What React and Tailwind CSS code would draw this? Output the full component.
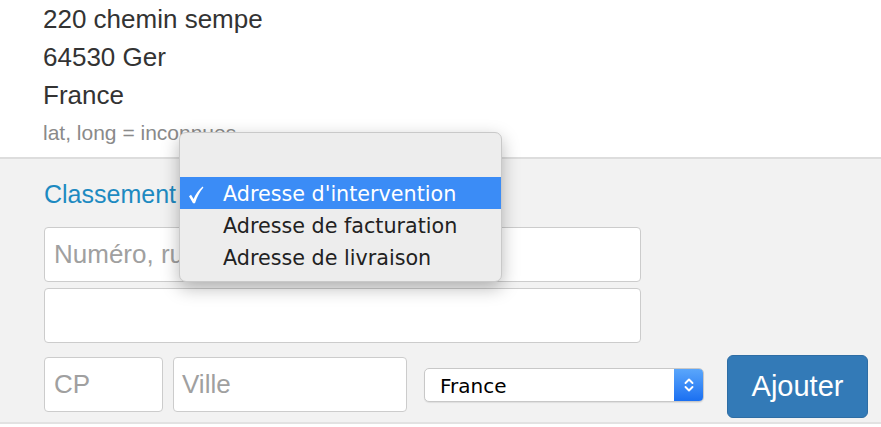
import React from "react";

function Chevrons() {
  return (
    <svg width="12" height="20" viewBox="0 0 12 20" fill="none" stroke="white" strokeWidth="1.9" strokeLinecap="round" strokeLinejoin="round">
      <path d="M2.5 8 L6 4.5 L9.5 8" />
      <path d="M2.5 12 L6 15.5 L9.5 12" />
    </svg>
  );
}

function Check() {
  return (
    <svg width="16" height="18" viewBox="0 0 16 18" fill="white">
      <path d="M1 10.2 L3 8.8 L5.6 13 C7.6 8.6 10.6 4 14.6 0.6 L15.4 1.4 C11.8 5.4 9.2 10.6 7 17.2 L5 17.2 Z" />
    </svg>
  );
}

export default function App() {
  return (
    <div className="relative w-[881px] h-[427px] overflow-hidden bg-white text-[#333]" style={{ fontFamily: '"Liberation Sans", Arial, sans-serif' }}>
      <div className="pl-[43px]">
        <div className="text-[26px] leading-[38px]">220 chemin sempe</div>
        <div className="text-[26px] leading-[38px]">64530 Ger</div>
        <div className="text-[26px] leading-[38px]">France</div>
        <div className="text-[21px] leading-[38px] text-[#8a8a8a]">lat, long = inconnues</div>
      </div>
      <div className="mt-[5px] border-t-2 border-[#dddddd] bg-[#f2f2f2] h-[265px] pl-[44px]">
        <div className="pt-[20px] text-[25px] leading-[30px] text-[#1d8ac1]">Classement</div>
        <div className="mt-[18px] flex flex-col gap-[6px]">
          <div className="w-[597px] h-[55px] bg-white border border-[#cccccc] rounded-[4px] pl-[9px] flex items-center text-[26px] text-[#a0a0a0]">Numéro, rue</div>
          <div className="w-[597px] h-[55px] bg-white border border-[#cccccc] rounded-[4px]"></div>
        </div>
        <div className="mt-[12px] flex items-start">
          <div className="mt-[2px] w-[119px] h-[55px] bg-white border border-[#cccccc] rounded-[4px] pl-[9px] flex items-center text-[26px] text-[#a0a0a0]">CP</div>
          <div className="mt-[2px] ml-[10px] w-[234px] h-[55px] bg-white border border-[#cccccc] rounded-[4px] pl-[8px] flex items-center text-[26px] text-[#a0a0a0]">Ville</div>
          <div className="mt-[13px] ml-[17px] w-[280px] h-[34px] bg-white rounded-[5px] border border-[#c8c8c8] flex items-stretch overflow-hidden shadow-[0_1px_1px_rgba(0,0,0,0.08)]">
            <div className="flex-1 pl-[15px] pt-[1px] flex items-center text-[20px] text-black" style={{ fontFamily: '"DejaVu Sans", sans-serif' }}>France</div>
            <div className="w-[29px] bg-gradient-to-b from-[#5aa6fb] to-[#1a6ff1] flex items-center justify-center">
              <Chevrons />
            </div>
          </div>
          <div className="ml-[23px] w-[141px] h-[63px] bg-[#337ab7] rounded-[6px] border border-[#2e6da4] flex items-center justify-center text-white text-[29px]">Ajouter</div>
        </div>
      </div>
      <div className="border-t-2 border-[#e2e2e2]"></div>

      <div className="absolute left-[179px] top-[132px] w-[323px] h-[150px] bg-[#ededed] rounded-[7px] border border-[#c9c9c9] shadow-[0_6px_18px_rgba(0,0,0,0.28)] pt-[12px]" style={{ fontFamily: '"DejaVu Sans", sans-serif' }}>
        <div className="h-[32px]"></div>
        <div className="h-[32px] pt-[3px] bg-[#3b8cf6] flex items-center text-white text-[20.7px]">
          <span className="w-[43px] pl-[8px] flex items-center"><Check /></span>
          <span>Adresse d'intervention</span>
        </div>
        <div className="h-[32px] pt-[3px] flex items-center text-[#222] text-[20.7px] pl-[43px]">Adresse de facturation</div>
        <div className="h-[32px] pt-[3px] flex items-center text-[#222] text-[20.7px] pl-[43px]">Adresse de livraison</div>
      </div>
    </div>
  );
}
